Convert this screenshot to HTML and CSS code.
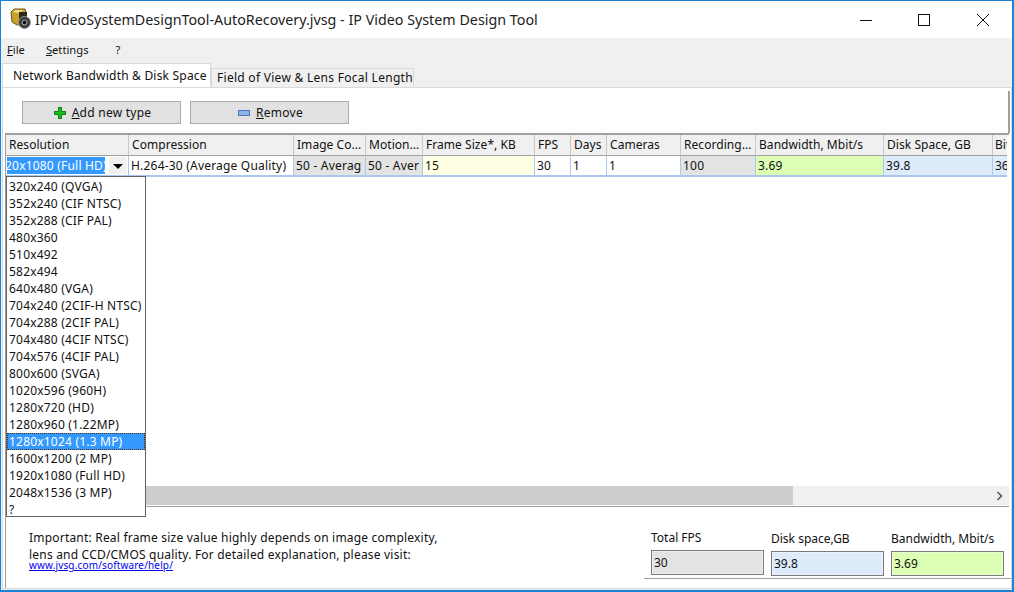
FILE: index.html
```html
<!DOCTYPE html>
<html lang="en">
<head>
    <meta charset="UTF-8">
    <title>IP Video System Design Tool</title>
    <link rel="stylesheet" href="styles.css">
</head>
<body>
<div class="window">
    <div class="titlebar">
        <svg class="app-icon" width="22" height="26" viewBox="0 0 22 26">
            <path d="M1 5 L4 2 L15 2 L16 5 L17 17 L7 18 L2 15 Z" fill="#c9a42a" stroke="#6b5a1a"/>
            <path d="M3 5 L5 3 L14 3 L8 6 Z" fill="#f0dc82"/>
            <rect x="9" y="5" width="8" height="7" fill="#2b2b20"/>
            <circle cx="14.5" cy="15.5" r="6" fill="#3a3a3a" stroke="#9a9a9a"/>
            <circle cx="14.5" cy="15.5" r="2.5" fill="#111" stroke="#bbb"/>
        </svg>
        <span class="title">IPVideoSystemDesignTool-AutoRecovery.jvsg - IP Video System Design Tool</span>
        <div class="win-controls">
            <svg width="12" height="12" viewBox="0 0 12 12"><path d="M0 6.5H12" stroke="#111"/></svg>
            <svg width="12" height="12" viewBox="0 0 12 12"><rect x="0.5" y="0.5" width="11" height="11" fill="none" stroke="#111"/></svg>
            <svg width="12" height="12" viewBox="0 0 12 12"><path d="M0 0L12 12M12 0L0 12" stroke="#111"/></svg>
        </div>
    </div>

    <div class="menubar">
        <span class="menu-item"><u>F</u>ile</span>
        <span class="menu-item"><u>S</u>ettings</span>
        <span class="menu-item">?</span>
    </div>

    <div class="tabs">
        <div class="tab active">Network Bandwidth &amp; Disk Space</div>
        <div class="tab">Field of View &amp; Lens Focal Length</div>
    </div>

    <div class="panel">
        <div class="toolbar">
            <button class="btn">
                <svg width="12" height="12" viewBox="0 0 12 12"><path d="M4.5 .5H7.5V4.5H11.5V7.5H7.5V11.5H4.5V7.5H.5V4.5H4.5Z" fill="#16c21a" stroke="#0b7a10"/></svg>
                <span><u>A</u>dd new type</span>
            </button>
            <button class="btn">
                <svg width="12" height="6" viewBox="0 0 12 6"><rect x=".5" y=".5" width="11" height="5" fill="#8fb4e8" stroke="#4a76b8"/></svg>
                <span><u>R</u>emove</span>
            </button>
        </div>

        <div class="grid-box">
            <div class="grid">
                <div class="head">Resolution</div>
                <div class="head">Compression</div>
                <div class="head">Image Co...</div>
                <div class="head">Motion...</div>
                <div class="head">Frame Size*, KB</div>
                <div class="head">FPS</div>
                <div class="head">Days</div>
                <div class="head">Cameras</div>
                <div class="head">Recording...</div>
                <div class="head">Bandwidth, Mbit/s</div>
                <div class="head">Disk Space, GB</div>
                <div class="head last">Bit</div>

                <div class="cell combo">
                    <span class="combo-value"><span class="combo-text">20x1080 (Full HD)</span></span>
                    <span class="combo-arrow"></span>
                </div>
                <div class="cell">H.264-30 (Average Quality)</div>
                <div class="cell gray">50 - Averag</div>
                <div class="cell gray">50 - Aver</div>
                <div class="cell yellow">15</div>
                <div class="cell">30</div>
                <div class="cell">1</div>
                <div class="cell">1</div>
                <div class="cell gray">100</div>
                <div class="cell green">3.69</div>
                <div class="cell blue">39.8</div>
                <div class="cell blue last">36</div>
            </div>

            <div class="scrollbar">
                <div class="scroll-thumb"></div>
                <svg class="scroll-arrow" width="8" height="10" viewBox="0 0 8 10"><path d="M1.5 1L5.5 5L1.5 9" fill="none" stroke="#555" stroke-width="1.6"/></svg>
            </div>

            <ul class="dropdown">
                <li>320x240 (QVGA)</li>
                <li>352x240 (CIF NTSC)</li>
                <li>352x288 (CIF PAL)</li>
                <li>480x360</li>
                <li>510x492</li>
                <li>582x494</li>
                <li>640x480 (VGA)</li>
                <li>704x240 (2CIF-H NTSC)</li>
                <li>704x288 (2CIF PAL)</li>
                <li>704x480 (4CIF NTSC)</li>
                <li>704x576 (4CIF PAL)</li>
                <li>800x600 (SVGA)</li>
                <li>1020x596 (960H)</li>
                <li>1280x720 (HD)</li>
                <li>1280x960 (1.22MP)</li>
                <li class="selected">1280x1024 (1.3 MP)</li>
                <li>1600x1200 (2 MP)</li>
                <li>1920x1080 (Full HD)</li>
                <li>2048x1536 (3 MP)</li>
                <li>?</li>
            </ul>
        </div>

        <div class="footer">
            <div class="note">
                <p>Important: Real frame size value highly depends on image complexity,</p>
                <p>lens and CCD/CMOS quality. For detailed explanation, please visit:</p>
                <a class="help-link" href="#">www.jvsg.com/software/help/</a>
            </div>
            <div class="totals">
                <div class="total total-first">
                    <label>Total FPS</label>
                    <div class="value gray">30</div>
                </div>
                <div class="total">
                    <label>Disk space,GB</label>
                    <div class="value blue">39.8</div>
                </div>
                <div class="total">
                    <label>Bandwidth, Mbit/s</label>
                    <div class="value green">3.69</div>
                </div>
            </div>
        </div>
    </div>
</div>
</body>
</html>
```

FILE: styles.css
```css
* {
    box-sizing: border-box;
}
html, body {
    margin: 0;
    height: 100%;
    overflow: hidden;
}
body {
    font-family: "Noto Sans", Tahoma, sans-serif;
    font-size: 12px;
    color: #111;
}
.window {
    width: 1014px;
    height: 592px;
    border: 1px solid #1883d7;
    border-bottom-width: 2px;
    border-right-width: 2px;
    background: #f0f0f0;
    display: flex;
    flex-direction: column;
}
.titlebar {
    height: 37px;
    background: #fff;
    display: flex;
    align-items: center;
    padding-left: 9px;
    flex: none;
}
.app-icon {
    margin-right: 3px;
}
.title {
    font-size: 14.3px;
    color: #222;
}
.win-controls {
    margin-left: auto;
    display: flex;
    gap: 46px;
    padding-right: 23px;
}
.win-controls svg:last-child {
    margin-left: 1px;
}
.menubar {
    height: 25px;
    padding: 4px 0 0 6px;
    display: flex;
    gap: 21px;
    font-size: 11.2px;
    flex: none;
}
.menu-item:last-child {
    margin-left: 6px;
}
.tabs {
    display: flex;
    align-items: flex-end;
    height: 24px;
    padding-left: 1px;
    flex: none;
}
.tab {
    height: 19px;
    width: 203px;
    background: #f0f0f0;
    border: 1px solid #d9d9d9;
    border-bottom: none;
    padding-left: 5px;
    white-space: nowrap;
    letter-spacing: .28px;
}
.tab.active {
    height: 24px;
    width: 209px;
    background: #fff;
    padding: 3px 0 0 10px;
    letter-spacing: .2px;
}
.panel {
    flex: 1;
    background: #fff;
    border: 1px solid #d9d9d9;
    margin: 0 0 1px 1px;
    display: flex;
    flex-direction: column;
    min-height: 0;
}
.toolbar {
    display: flex;
    gap: 9px;
    height: 42px;
    padding: 10px 0 0 19px;
    border-right: 2px solid #a0a0a0;
    margin: 3px 1px 0 0;
    flex: none;
}
.btn {
    width: 159px;
    height: 23px;
    background: #e1e1e1;
    border: 1px solid #adadad;
    font: inherit;
    color: #111;
    display: flex;
    align-items: center;
    justify-content: center;
    gap: 6px;
    padding: 0 0 0 2px;
    letter-spacing: .25px;
}
.grid-box {
    position: relative;
    flex: 1;
    margin-left: 2px;
    margin-right: 2px;
    border-top: 2px solid #a0a0a0;
    border-left: 1px solid #a0a0a0;
    border-bottom: 1px solid #a0a0a0;
    display: flex;
    flex-direction: column;
    justify-content: space-between;
    min-height: 0;
}
.grid {
    display: grid;
    grid-template-columns: 123px 165px 72px 57px 112px 36px 36px 74px 75px 128px 109px 14px;
    grid-template-rows: 21px 21px;
    overflow: hidden;
}
.head {
    background: #f0f0f0;
    border-right: 1px solid #c8c8c8;
    border-bottom: 1px solid #a0a0a0;
    padding: 1px 0 0 3px;
    white-space: nowrap;
    overflow: hidden;
    letter-spacing: .05px;
}
.cell {
    background: #fff;
    border-right: 1px solid #a9c8ee;
    border-bottom: 2px solid #a9c8ee;
    padding: 1px 0 0 2px;
    white-space: nowrap;
    overflow: hidden;
    letter-spacing: .2px;
}
.head.last, .cell.last {
    padding-left: 2px;
    border-right: none;
    letter-spacing: 0;
}
.gray {
    background: #e3e3e3;
}
.yellow {
    background: #ffffe3;
}
.green {
    background: #dcffb4;
}
.blue {
    background: #deebfb;
}
.combo {
    display: flex;
    padding: 1px 0 1px 1px;
}
.combo-value {
    width: 98px;
    overflow: hidden;
    white-space: nowrap;
}
.combo-text {
    display: block;
    background: #3399ff;
    color: #fff;
    text-indent: -2px;
    overflow: hidden;
}
.combo-arrow {
    width: 18px;
    margin-left: 4px;
    background: #f0f0f0;
    position: relative;
}
.combo-arrow::after {
    content: "";
    position: absolute;
    left: 4px;
    top: 7px;
    border: 5px solid transparent;
    border-top: 5px solid #000;
    border-bottom: none;
}
.scrollbar {
    height: 19px;
    margin-bottom: 1px;
    background: #f0f0f0;
    position: relative;
    flex: none;
}
.scroll-thumb {
    width: 787px;
    height: 100%;
    background: #cdcdcd;
}
.scroll-arrow {
    position: absolute;
    right: 5px;
    top: 5px;
}
.dropdown {
    position: absolute;
    left: 0;
    top: 41px;
    width: 140px;
    height: 341px;
    margin: 0;
    padding: 1px 0 0;
    list-style: none;
    background: #fff;
    border: 1px solid #646464;
    letter-spacing: .2px;
}
.dropdown li {
    height: 17px;
    line-height: 17px;
    padding-left: 2px;
    white-space: nowrap;
}
.dropdown li.selected {
    background: #3399ff;
    color: #fff;
    outline: 1px dotted #5a3000;
    outline-offset: -1px;
}
.footer {
    height: 81px;
    display: flex;
    justify-content: space-between;
    padding: 22px 0 5px 23px;
    margin-left: 2px;
    border-left: 1px solid #a0a0a0;
    flex: none;
}
.note {
    letter-spacing: .2px;
}
.note p {
    margin: 0;
    line-height: 17px;
}
.help-link {
    display: block;
    color: #0000ee;
    font-size: 10px;
    line-height: 11px;
    margin-top: -3px;
    letter-spacing: .15px;
}
.totals {
    display: flex;
    gap: 7px;
    padding: 0 7px 0 7px;
    height: 50px;
    border-bottom: 1px solid #a0a0a0;
}
.total {
    width: 113px;
    display: flex;
    flex-direction: column;
    padding-top: 1px;
}
.total-first {
    padding-top: 0;
}
.total label {
    height: 21px;
}
.value {
    height: 25px;
    border: 1px solid #7a7a7a;
    padding: 3px 0 0 2px;
    box-shadow: inset 0 0 0 1px rgba(255, 255, 255, .4);
}
```
